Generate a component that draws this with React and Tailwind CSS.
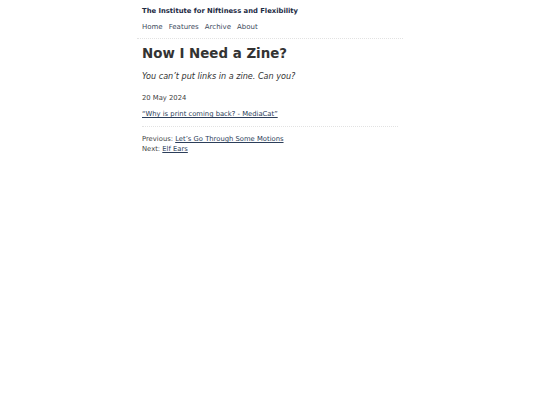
export default function App() {
  return (
    <div className="min-h-[405px] bg-white text-[#333] font-['DejaVu_Sans',sans-serif]">
      <div className="w-[266px] mx-auto pt-[7px]">
        <header className="px-[5px] pb-[6px] border-b border-dotted border-[#e2e2e2]">
          <a href="#" className="block text-[6.8px] leading-[9px] font-bold text-[#1d2b44]">
            The Institute for Niftiness and Flexibility
          </a>
          <nav className="flex gap-[6px] mt-[7px] text-[7px] leading-[9px] text-[#3d4a5c]">
            <a href="#">Home</a>
            <a href="#">Features</a>
            <a href="#">Archive</a>
            <a href="#">About</a>
          </nav>
        </header>

        <article className="px-[5px] pt-[6px]">
          <h1 className="text-[13.4px] leading-[18px] font-bold text-[#333]">Now I Need a Zine?</h1>
          <p className="mt-[8px] text-[8.1px] leading-[11px] italic text-[#333]">
            You can’t put links in a zine. Can you?
          </p>
          <p className="mt-[12px] text-[6.8px] leading-[9px] text-[#444]">20 May 2024</p>
          <p className="mt-[7px] text-[6.8px] leading-[9px]">
            <a href="#" className="underline text-[#2c3e5a]">“Why is print coming back? - MediaCat”</a>
          </p>
          <div className="mt-[7px] pt-[7px] border-t border-dotted border-[#e2e2e2] text-[6.8px] leading-[10px] text-[#444] w-[256px]">
            <p>
              Previous: <a href="#" className="underline text-[#2c3e5a]">Let’s Go Through Some Motions</a>
            </p>
            <p>
              Next: <a href="#" className="underline text-[#2c3e5a]">Elf Ears</a>
            </p>
          </div>
        </article>
      </div>
    </div>
  );
}
